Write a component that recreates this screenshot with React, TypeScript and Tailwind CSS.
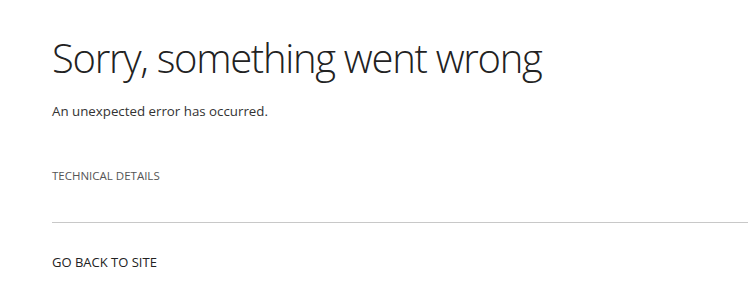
import React from 'react';

const App: React.FC = () => {
  return (
    <div className="min-h-screen bg-white pl-[52px] pt-[30px] font-['Open_Sans',sans-serif] text-[#333]">
      <h1 className="text-[40px] font-light leading-[56px] tracking-[-1.3px] text-[#222]">Sorry, something went wrong</h1>
      <p className="mt-[15px] text-[13.3px] leading-[20px] text-[#333]">An unexpected error has occurred.</p>
      <div className="mt-[47px] text-[11.5px] leading-[16px] text-[#555]">TECHNICAL DETAILS</div>
      <hr className="mt-[38px] border-t border-[#c8c8c8]" />
      <a href="#" className="mt-[29px] block text-[13px] leading-[20px] text-[#222]">GO BACK TO SITE</a>
    </div>
  );
};

export default App;
